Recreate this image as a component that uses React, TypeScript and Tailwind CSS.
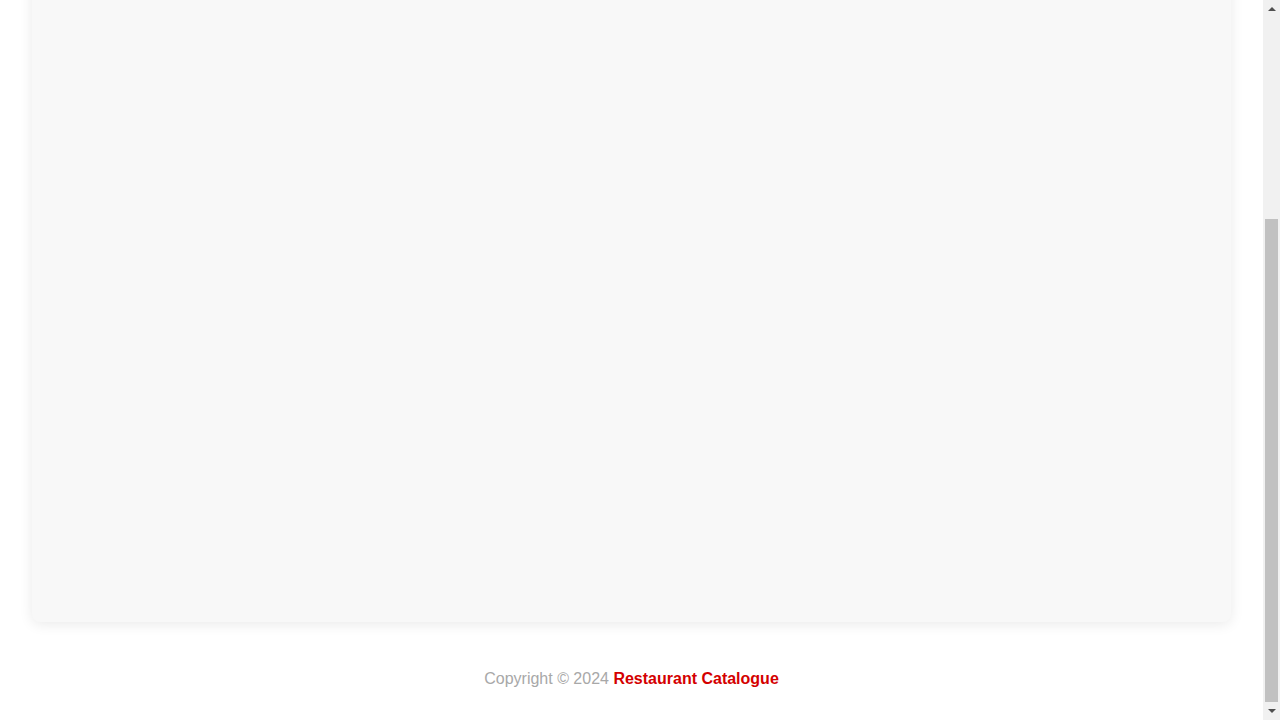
export default function App() {
  return (
    <div className="flex h-screen overflow-hidden bg-white font-['Liberation_Sans',Arial,sans-serif]">
      {/* Page, scrolled to the bottom */}
      <div className="flex min-w-0 flex-1 flex-col justify-end overflow-hidden">
        <main className="shrink-0 px-8">
          {/* Content card */}
          <div className="h-[894px] rounded-lg bg-[#f8f8f8] shadow-[0_2px_14px_rgba(0,0,0,0.09)]" />
        </main>

        {/* Footer */}
        <footer className="mt-10 shrink-0 pt-2 pb-8 text-center text-base leading-[18px]">
          <span className="text-[#a8a8a8]">Copyright © 2024 </span>
          <span className="font-bold text-[#d40000]">Restaurant Catalogue</span>
        </footer>
      </div>

      {/* Scrollbar */}
      <div className="flex w-[17px] shrink-0 flex-col bg-[#f1f1f1]">
        <div className="flex h-[17px] items-center justify-center">
          <svg width="8" height="5" viewBox="0 0 8 5">
            <path d="M0 5 L4 1 L8 5 Z" fill="#505050" />
          </svg>
        </div>
        <div className="flex flex-1 flex-col px-[2px] pt-[202px] pb-px">
          <div className="flex-1 bg-[#c1c1c1]" />
        </div>
        <div className="flex h-[17px] items-center justify-center">
          <svg width="8" height="5" viewBox="0 0 8 5">
            <path d="M0 0 L4 4 L8 0 Z" fill="#505050" />
          </svg>
        </div>
      </div>
    </div>
  );
}
